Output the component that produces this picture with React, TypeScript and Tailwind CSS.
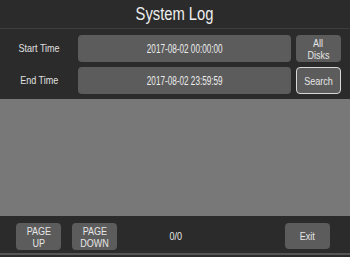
import React from 'react';

const font = { fontFamily: '"Liberation Sans", Arial, sans-serif' };

// Arial Narrow isn't installed: squeeze Liberation Sans horizontally
const N: React.FC<{ children: React.ReactNode; className?: string }> = ({ children, className = 'scale-x-[0.82]' }) => (
    <span className={`inline-block whitespace-nowrap ${className}`}>{children}</span>
);

const Btn: React.FC<{ children: React.ReactNode; className?: string }> = ({ children, className = '' }) => (
    <div className={`flex flex-col items-center justify-center rounded-[4px] bg-[#5c5c5c] text-[11px] leading-[12px] text-[#e6e6e6] ${className}`}>
        {children}
    </div>
);

export default function App() {
    return (
        <div className="w-[350px] h-[257px] bg-[#2b2b2b] flex flex-col overflow-hidden" style={font}>
            {/* Title */}
            <div className="h-[29px] flex items-center justify-center border-b border-[#3d3d3d] text-[18px] text-[#eeeeee]">
                <N>System Log</N>
            </div>

            {/* Time rows */}
            <div className="flex flex-col gap-[5px] pt-[6px] pb-[5px]">
                <div className="flex items-center h-[27px]">
                    <div className="w-[78px] text-center text-[11px] text-[#e0e0e0]"><N>Start Time</N></div>
                    <div className="w-[213px] h-full rounded-[4px] bg-[#5c5c5c] flex items-center justify-center text-[12px] text-[#ececec]">
                        <N className="scale-x-[0.68]">2017-08-02 00:00:00</N>
                    </div>
                    <Btn className="ml-[5px] w-[45px] h-full">
                        <N>All</N>
                        <N>Disks</N>
                    </Btn>
                </div>
                <div className="flex items-center h-[27px]">
                    <div className="w-[78px] text-center text-[11px] text-[#e0e0e0]"><N>End Time</N></div>
                    <div className="w-[213px] h-full rounded-[4px] bg-[#5c5c5c] flex items-center justify-center text-[12px] text-[#ececec]">
                        <N className="scale-x-[0.68]">2017-08-02 23:59:59</N>
                    </div>
                    <Btn className="ml-[5px] w-[45px] h-full border border-[#d8d8d8]">
                        <N>Search</N>
                    </Btn>
                </div>
            </div>

            {/* Log area */}
            <div className="h-[117px] bg-[#787878]" />

            {/* Bottom bar */}
            <div className="h-[37px] flex items-start pt-[7px] pl-[16px] pr-[20px]">
                <Btn className="w-[45px] h-[27px]">
                    <N>PAGE</N>
                    <N>UP</N>
                </Btn>
                <Btn className="ml-[11px] w-[45px] h-[27px]">
                    <N>PAGE</N>
                    <N>DOWN</N>
                </Btn>
                <div className="w-[117px] h-[27px] flex items-center justify-center text-[11px] text-[#e6e6e6]"><N>0/0</N></div>
                <Btn className="ml-auto w-[45px] h-[26px]">
                    <N>Exit</N>
                </Btn>
            </div>
            <div className="h-[2px] bg-[#555555]" />
            <div className="flex-1 bg-[#2b2b2b]" />
        </div>
    );
}
